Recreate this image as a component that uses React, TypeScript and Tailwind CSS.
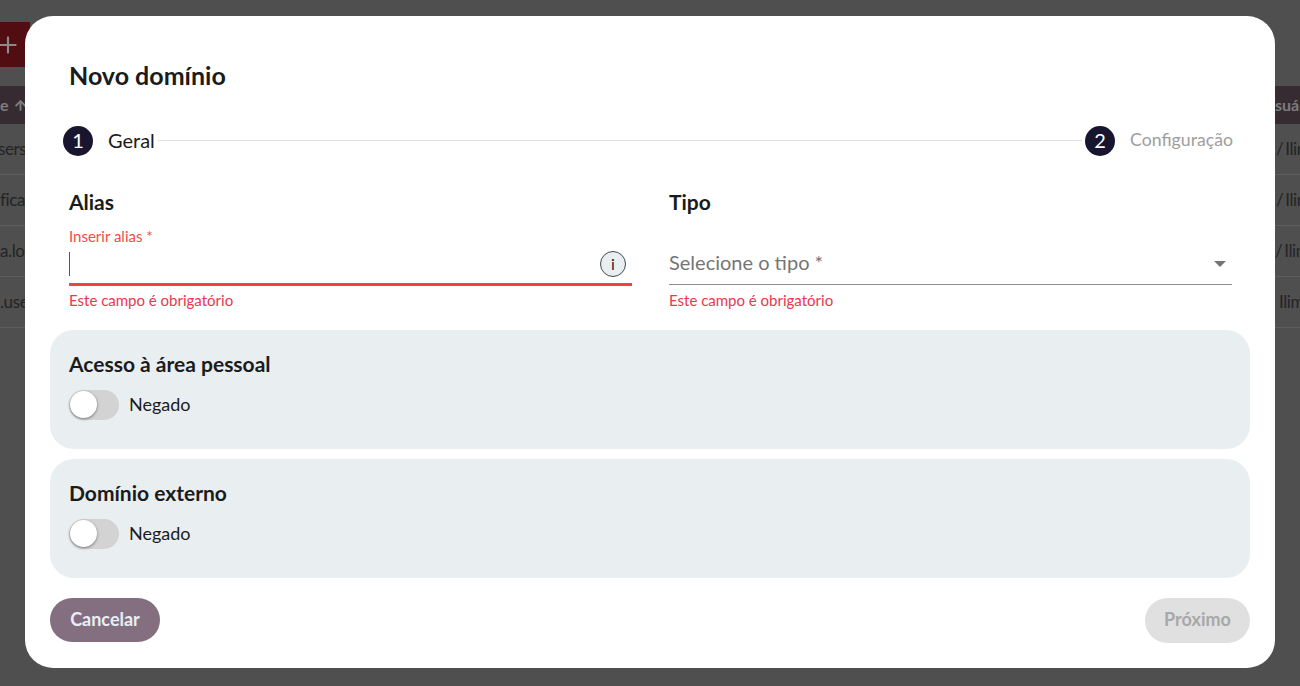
import { ArrowUp, Plus } from 'lucide-react';

const rows = [
  { left: 'sers', shift: '-ml-[2px]', right: '/ Ilimitado', indent: 'pl-[1px]' },
  { left: 'ficat', shift: 'ml-0', right: '/ Ilimitado', indent: 'pl-[1px]' },
  { left: 'a.lo', shift: 'ml-0', right: '/ Ilimitado', indent: 'pl-0' },
  { left: '.use', shift: 'ml-0', right: 'Ilimitado', indent: 'pl-[4px]' },
];

function Toggle() {
  return (
    <div className="flex h-[30px] w-[50px] items-center rounded-full bg-[#d3d3d3] pl-[1px]">
      <div className="mb-[1px] h-[27px] w-[27px] rounded-full bg-white shadow-[0_1px_3px_rgba(0,0,0,0.45)]" />
    </div>
  );
}

function AccessCard({ title }: { title: string }) {
  return (
    <div className="h-[119px] rounded-[24px] bg-[#e9eef1] px-[19px] pt-[21px]">
      <h3 className="text-[21px] leading-[26px] font-bold text-[#1b1b1b]">{title}</h3>
      <div className="mt-[13px] flex items-center gap-[10px]">
        <Toggle />
        <span className="pb-[3px] text-[18px] leading-[24px] text-[#1b1b1b]">Negado</span>
      </div>
    </div>
  );
}

function Step({ n, label, muted }: { n: number; label: string; muted?: boolean }) {
  return (
    <div className="flex h-[30px] items-center">
      <div className="flex h-[30px] w-[30px] items-center justify-center rounded-full bg-[#17162e] pb-[2px] text-[20px] leading-[24px] text-white">{n}</div>
      <span className={muted ? 'ml-[15px] pb-[2px] text-[17.7px] leading-[22px] text-[#9e9e9e]' : 'ml-[15px] pb-[2px] text-[20px] leading-[24px] text-[#1b1b1b]'}>{label}</span>
    </div>
  );
}

export default function App() {
  return (
    <div className="relative h-[686px] w-[1300px] overflow-hidden bg-[#4f4f4f] font-['Lato','Noto_Sans',sans-serif]">
      {/* page behind the dialog */}
      <div className="pt-[22px]">
        <div className="flex h-[45px] w-[30px] items-center bg-[#510d12]">
          <Plus size={26} className="-ml-[5px] text-[#8a8a8a]" />
        </div>
        <div className="mt-[19px] flex h-[38px] items-center justify-between bg-[#362b31] text-[16px] font-bold text-[#7d7d7d]">
          <div className="flex items-center gap-[4px]">
            <span>e</span>
            <ArrowUp size={15} strokeWidth={3} />
          </div>
          <span className="w-[25px] whitespace-nowrap">suários</span>
        </div>
        {rows.map((row) => (
          <div key={row.left} className="flex h-[51px] items-center justify-between border-b border-[#5e5e5e] text-[17px] tracking-[-0.4px] text-[#242424]">
            <span className={`whitespace-nowrap ${row.shift}`}>{row.left}</span>
            <span className={`w-[25px] whitespace-nowrap [word-spacing:-2px] ${row.indent}`}>{row.right}</span>
          </div>
        ))}
      </div>

      {/* dialog */}
      <div className="absolute top-[16px] left-[25px] h-[652px] w-[1250px] rounded-[28px] bg-white px-[25px] pt-[43px] text-[#1b1b1b]">
        <h2 className="px-[19px] text-[25px] leading-[32px] font-bold">Novo domínio</h2>

        <div className="mt-[35px] flex items-center pr-[17px] pl-[13px]">
          <Step n={1} label="Geral" />
          <div className="mx-[3px] mb-[1px] h-px flex-1 bg-[#e0e0e0]" />
          <Step n={2} label="Configuração" muted />
        </div>

        <div className="mt-[34px] flex gap-[37px] pr-[18px] pl-[19px]">
          <div className="w-[563px]">
            <h3 className="text-[21px] leading-[24px] font-bold">Alias</h3>
            <label className="mt-[13px] block text-[15px] leading-[18px] text-[#f44b4b]">Inserir alias *</label>
            <div className="flex h-[41px] items-center justify-between border-b-[3px] border-[#f44336] pr-[6px]">
              <div className="h-[24px] w-px bg-[#c62828]" />
              <div className="mb-[1px] flex h-[26px] w-[26px] items-center justify-center rounded-full border border-[#3f4a55] bg-[#e9eef1]">
                <span className="text-[16px] leading-none text-[#222222]">i</span>
              </div>
            </div>
            <p className="mt-[5px] text-[15px] leading-[18px] text-[#e8384f]">Este campo é obrigatório</p>
          </div>
          <div className="w-[563px]">
            <h3 className="text-[21px] leading-[24px] font-bold">Tipo</h3>
            <div className="mt-[31px] flex h-[40px] items-center justify-between border-b border-[#8c8c8c] pr-[6px]">
              <span className="pb-[6px] text-[20px] leading-[26px] text-[#757575]">Selecione o tipo *</span>
              <div className="mb-[2px] h-0 w-0 border-x-[6px] border-t-[6px] border-x-transparent border-t-[#757575]" />
            </div>
            <p className="mt-[6px] text-[15px] leading-[18px] text-[#e8384f]">Este campo é obrigatório</p>
          </div>
        </div>

        <div className="mt-[21px] flex flex-col gap-[10px]">
          <AccessCard title="Acesso à área pessoal" />
          <AccessCard title="Domínio externo" />
        </div>

        <div className="mt-[20px] flex items-start justify-between">
          <button className="h-[44px] w-[110px] rounded-full bg-[#846f80] pb-[2px] text-[18px] font-bold text-[#e8eef5]">Cancelar</button>
          <button className="h-[45px] w-[105px] rounded-full bg-[#e0e0e0] pb-[2px] text-[18px] font-bold text-[#a8a8a8]">Próximo</button>
        </div>
      </div>
    </div>
  );
}
